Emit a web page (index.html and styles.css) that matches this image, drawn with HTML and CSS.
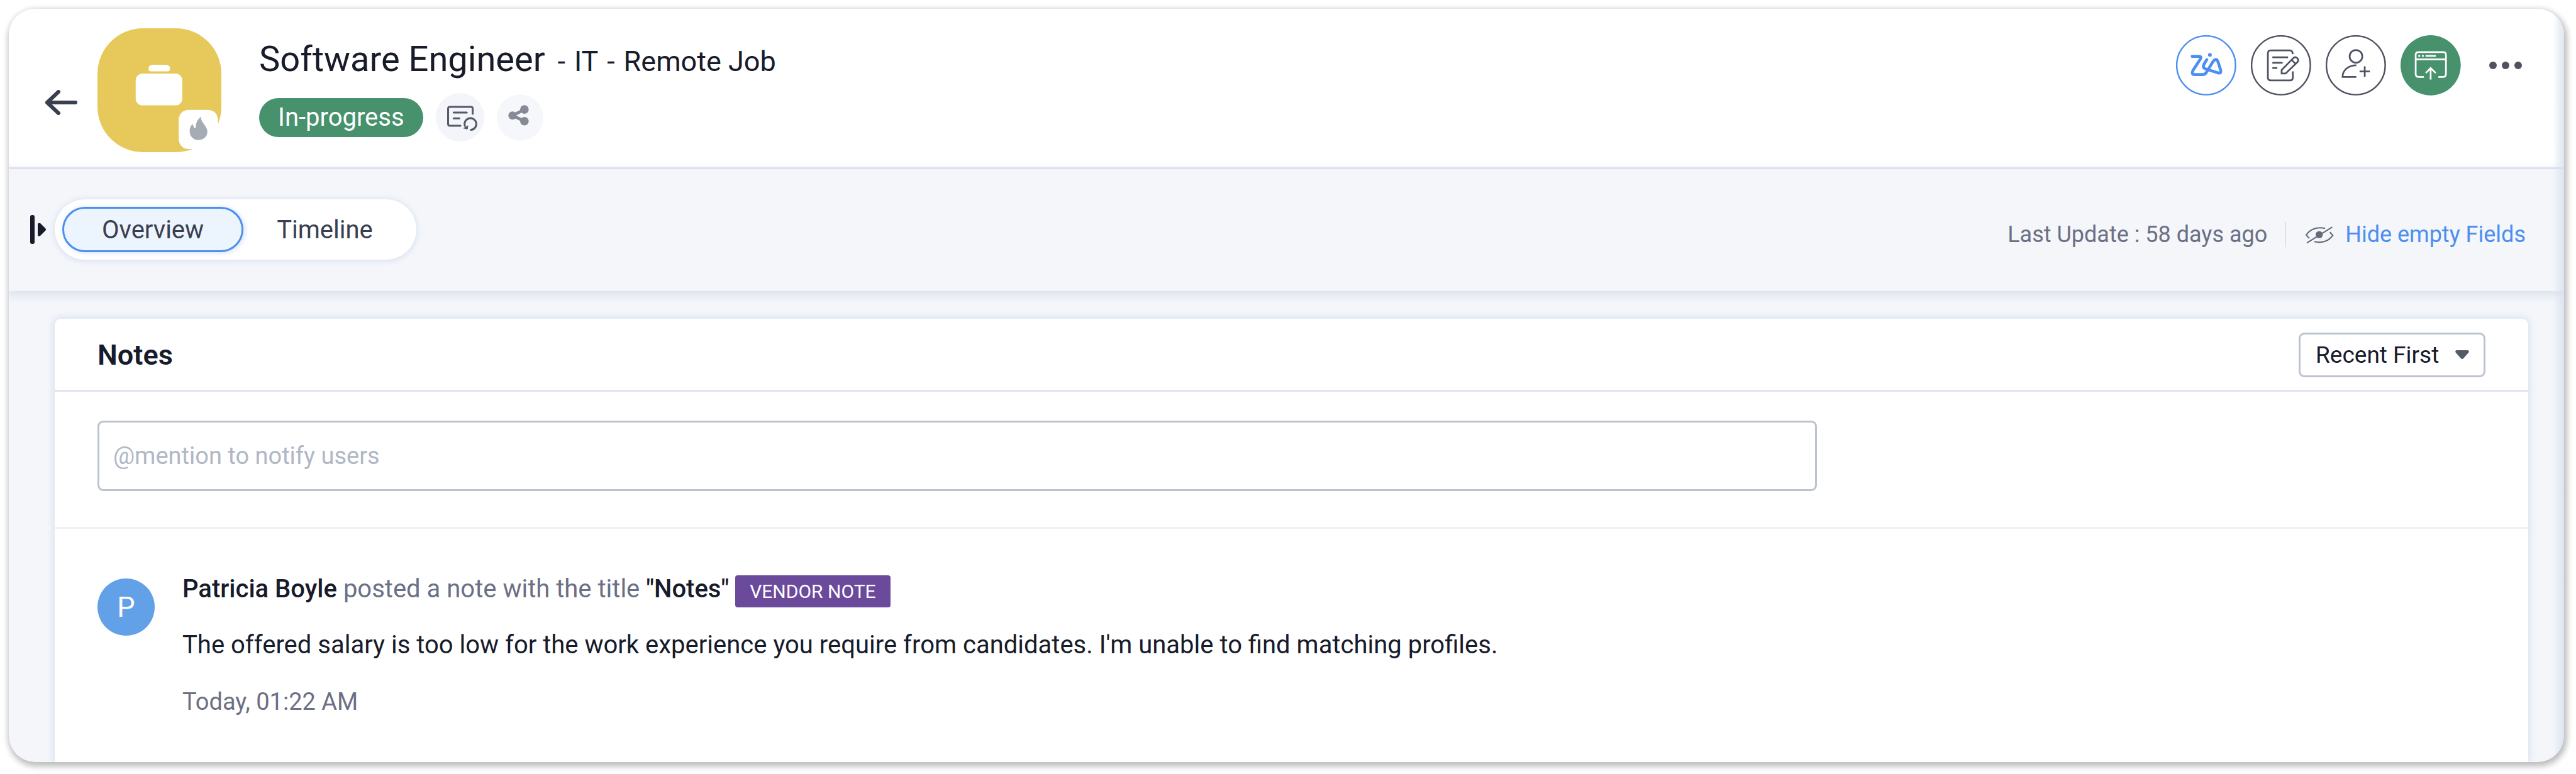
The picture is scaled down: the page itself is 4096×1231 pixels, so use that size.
FILE: index.html
```html
<!DOCTYPE html>
<html lang="en">
<head>
    <meta charset="UTF-8">
    <meta name="viewport" content="width=device-width, initial-scale=1.0">
    <title>Software Engineer - Job Opening</title>
    <link rel="stylesheet" href="styles.css">
</head>
<body>
    <main class="window">
        <header class="job-header">
            <button class="icon-btn back" aria-label="Back">
                <svg width="52" height="40" viewBox="0 0 52 40" fill="none" stroke="#3a3f4f" stroke-width="6" stroke-linecap="round" stroke-linejoin="round">
                    <path d="M49 20H4M22 3L4 20L22 37"/>
                </svg>
            </button>

            <svg class="job-logo" width="197" height="197" viewBox="0 0 723 723">
                <rect width="723" height="723" rx="265" fill="#e6c95a"/>
                <rect x="223" y="264" width="272" height="186" rx="40" fill="#fff"/>
                <path d="M298 237Q298 213 322 213H400Q423 213 423 237Q423 251 412 251H309Q298 251 298 237Z" fill="#fff"/>
                <rect x="474" y="476" width="229" height="229" rx="58" fill="#fff"/>
                <path d="M603 517C603 535 612 547 625 564C638 582 641 592 641 604C641 634 618 652 590 652C560 652 538 632 538 600C538 580 546 565 557 560C560 575 563 584 573 584C572 555 583 535 603 517Z" fill="#a5acb4"/>
            </svg>

            <div class="job-info">
                <h1>Software Engineer <small>-</small> <small>IT</small> <small>-</small> <small>Remote Job</small></h1>
                <div class="job-meta">
                    <span class="status">In-progress</span>
                    <button class="icon-btn" aria-label="Status history">
                        <svg width="77" height="77" viewBox="0 0 280 280" fill="none" stroke="#555a69" stroke-width="11" stroke-linecap="round">
                            <circle cx="140" cy="140" r="140" fill="#f4f5fa" stroke="none"/>
                            <path d="M213 120V90Q213 80 203 80H81Q71 80 71 90V179Q71 189 81 189H142M103 113H179M103 146H136"/>
                            <path d="M203 213A34 34 0 1 0 168 190"/>
                            <path d="M157 204L187 186L184 211Z" fill="#555a69" stroke="none"/>
                        </svg>
                    </button>
                    <button class="icon-btn" aria-label="Share">
                        <svg width="74" height="74" viewBox="0 0 270 270" fill="#858a96" stroke="#858a96">
                            <circle cx="135" cy="135" r="135" fill="#f6f7fb" stroke="none"/>
                            <path d="M160 88L91 123L160 156" fill="none" stroke-width="18"/>
                            <circle cx="91" cy="123" r="24" stroke="none"/>
                            <circle cx="160" cy="88" r="25" stroke="none"/>
                            <circle cx="160" cy="156" r="25" stroke="none"/>
                        </svg>
                    </button>
                </div>
            </div>

            <div class="actions">
                <button class="icon-btn" aria-label="Zia">
                    <svg width="96" height="96" viewBox="0 0 351 351" fill="none" stroke="#4c8ff0" stroke-width="17" stroke-linecap="round" stroke-linejoin="round">
                        <circle cx="175" cy="175" r="171" stroke-width="9"/>
                        <path d="M94 123H134Q150 123 142 138L99 204Q88 229 108 229H155Q168 229 176 217L216 152Q233 130 243 152L260 204Q263 224 246 219L172 196Q152 190 163 168L179 142"/>
                        <circle cx="197" cy="114" r="11" fill="#4c8ff0" stroke="none"/>
                    </svg>
                </button>
                <button class="icon-btn" aria-label="Edit">
                    <svg width="96" height="96" viewBox="0 0 351 351" fill="none" stroke="#4f5361" stroke-width="10">
                        <circle cx="175" cy="175" r="171" stroke-width="9"/>
                        <path d="M244 110Q242 88 226 88H116Q99 88 99 105V246Q99 263 116 263H228Q244 263 244 246V210"/>
                        <path d="M125 128H216M125 160H185M125 191H154"/>
                        <path d="M179 223V202L246 134Q258 122 270 134Q281 146 270 157L202 223ZM238 144L259 166"/>
                    </svg>
                </button>
                <button class="icon-btn" aria-label="Add candidate">
                    <svg width="96" height="96" viewBox="0 0 351 351" fill="none" stroke="#4f5361" stroke-width="10">
                        <circle cx="175" cy="175" r="171" stroke-width="9"/>
                        <circle cx="176" cy="123" r="37"/>
                        <path d="M178 175C130 175 98 205 98 243H178M197 211H257M227 181V241"/>
                    </svg>
                </button>
                <button class="icon-btn" aria-label="Publish">
                    <svg width="96" height="96" viewBox="0 0 351 351" fill="none" stroke="#fff" stroke-width="10">
                        <circle cx="175" cy="175" r="175" fill="#47916d" stroke="none"/>
                        <path d="M136 243H106Q88 243 88 225V114Q88 98 104 98H248Q264 98 264 114V225Q264 243 246 243H220M88 140H264"/>
                        <path d="M103 120H114M124 120H135M145 120H206M175 258V191M147 220L175 191L205 220"/>
                    </svg>
                </button>
                <button class="icon-btn more" aria-label="More">
                    <svg width="52" height="12" viewBox="0 0 52 12" fill="#4f5361">
                        <circle cx="6" cy="6" r="6"/>
                        <circle cx="26" cy="6" r="6"/>
                        <circle cx="46" cy="6" r="6"/>
                    </svg>
                </button>
            </div>
        </header>

        <div class="toolbar">
            <button class="icon-btn" aria-label="Expand sidebar">
                <svg width="26" height="46" viewBox="0 0 26 46" fill="#171b2a">
                    <rect width="7" height="46" rx="3"/>
                    <path d="M12 15Q12 12 16 13L24 21Q26 23 24 25L16 33Q12 35 12 31Z"/>
                </svg>
            </button>
            <nav class="tabs">
                <button class="tab active">Overview</button>
                <button class="tab">Timeline</button>
            </nav>
            <div class="toolbar-right">
                <span class="updated">Last Update : 58 days ago</span>
                <a class="hide-fields" href="#">
                    <svg width="46" height="29" viewBox="0 0 168 108" fill="none" stroke="#666b7b" stroke-width="8">
                        <path d="M24 75L6 55C28 22 68 4 118 16M146 38L163 57C140 90 100 106 54 94M10 102L160 8"/>
                        <circle cx="83" cy="53" r="21" fill="#666b7b" stroke="none"/>
                    </svg>
                    Hide empty Fields
                </a>
            </div>
        </div>

        <section class="card">
            <div class="card-header">
                <h2>Notes</h2>
                <div class="sort">
                    <select aria-label="Sort notes">
                        <option>Recent First</option>
                    </select>
                    <svg width="22" height="15" viewBox="0 0 22 15" fill="#555a69">
                        <path d="M2 0H20Q23 1 21 4L13 13Q11 15 9 13L1 4Q-1 1 2 0Z"/>
                    </svg>
                </div>
            </div>

            <div class="compose">
                <input type="text" aria-label="Add a note" placeholder="@mention to notify users">
            </div>

            <article class="note">
                <div class="avatar">P</div>
                <div class="note-content">
                    <div class="note-title">
                        <span><strong>Patricia Boyle</strong> posted a note with the title <strong>"Notes"</strong></span>
                        <span class="badge">VENDOR NOTE</span>
                    </div>
                    <p>The offered salary is too low for the work experience you require from candidates. I'm unable to find matching profiles.</p>
                    <time>Today, 01:22 AM</time>
                </div>
            </article>
        </section>
    </main>
</body>
</html>
```
FILE: styles.css
```css
* {
    box-sizing: border-box;
}
body {
    margin: 0;
    padding: 14px 19px 19px 14px;
    min-height: 100vh;
    display: flex;
    background: #fff;
    color: #171b2a;
    font-family: Roboto, "Liberation Sans", sans-serif;
    font-size: 40px;
}
h1, h2, p {
    margin: 0;
}
button, input, select {
    font: inherit;
    color: inherit;
}
svg {
    display: block;
    flex: none;
}
.window {
    position: relative;
    flex: 1;
    display: flex;
    flex-direction: column;
    overflow: hidden;
    border-radius: 42px;
    background: #f4f6fa;
    box-shadow: 2px 4px 10px 3px rgba(0, 0, 0, 0.26);
}
/* soft edge along the right side */
.window::after {
    content: "";
    position: absolute;
    inset: 0 0 0 auto;
    width: 18px;
    background: linear-gradient(to right, rgba(214, 224, 236, 0), rgba(214, 224, 236, 0.8));
    pointer-events: none;
}
.icon-btn {
    padding: 0;
    border: 0;
    background: none;
}

/* header */
.job-header {
    display: flex;
    align-items: flex-start;
    padding: 31px 67px 24px 57px;
    background: #fff;
    border-bottom: 3px solid #dde3ec;
}
.back {
    align-self: center;
    padding-top: 38px;
    margin-right: 32px;
}
.job-info {
    padding-top: 16px;
    margin-left: 60px;
}
h1 {
    font-size: 56px;
    font-weight: 400;
    line-height: 66px;
}
h1 small {
    font-size: 45px;
    line-height: 1;
}
h1 small:first-child {
    margin-left: 6px;
}
.job-meta {
    display: flex;
    align-items: center;
    gap: 20px;
    margin-top: 21px;
}
.status {
    padding: 0 30px;
    border-radius: 31px;
    background: #47916d;
    color: #fff;
    line-height: 62px;
}
.actions {
    display: flex;
    align-items: center;
    gap: 23px;
    margin-left: auto;
    padding-top: 11px;
}
.more {
    margin-left: 22px;
}

/* tabs bar */
.toolbar {
    display: flex;
    align-items: center;
    padding: 48px 61px 50px 34px;
    box-shadow: 0 4px 14px 2px #d9e0ec;
}
.tabs {
    display: flex;
    margin-left: 13px;
    padding: 12px 16px 12px 12px;
    border-radius: 48px;
    background: #fff;
    box-shadow: 0 1px 8px 2px #dbe3f0;
}
.tab {
    height: 72px;
    padding: 0 50px;
    border: 3px solid transparent;
    border-radius: 36px;
    background: none;
    color: #3a3f4f;
}
.tab.active {
    padding: 0 60px;
    border-color: #4c8ff0;
    background: #ecf4fe;
    box-shadow: 2px 1px 8px #d3dff0;
}
.toolbar-right {
    display: flex;
    align-items: center;
    margin-left: auto;
    padding-top: 16px;
    font-size: 36px;
    line-height: 40px;
}
.updated {
    padding-right: 28px;
    border-right: 2px solid #dce2ea;
    color: #6b7085;
}
.hide-fields {
    display: flex;
    align-items: center;
    gap: 18px;
    margin-left: 30px;
    color: #4c8ff0;
    text-decoration: none;
}

/* notes */
.card {
    flex: 1;
    margin: 44px 57px 0 73px;
    border-radius: 10px 10px 0 0;
    background: #fff;
    box-shadow: 0 0 12px 2px #d8e1ee;
}
.card-header {
    display: flex;
    align-items: center;
    justify-content: space-between;
    padding: 22px 68px 20px;
    border-bottom: 3px solid #dfe5ee;
}
h2 {
    font-size: 45px;
    font-weight: 600;
}
.sort {
    display: grid;
    align-items: center;
}
.sort select,
.sort svg {
    grid-area: 1 / 1;
}
.sort svg {
    justify-self: end;
    margin-right: 26px;
    pointer-events: none;
}
.sort select {
    appearance: none;
    height: 71px;
    padding: 0 70px 0 24px;
    border: 3px solid #bcc3cf;
    border-radius: 9px;
    background: #fff;
    font-size: 37px;
}
.compose {
    padding: 46px 68px 57px;
    border-bottom: 3px solid #eef1f5;
}
.compose input {
    display: block;
    width: 72%;
    height: 112px;
    padding: 0 22px;
    border: 3px solid #bcc3cf;
    border-radius: 9px;
    font-size: 38px;
}
.compose input::placeholder {
    color: #b0b8c6;
    opacity: 1;
}
.note {
    display: flex;
    gap: 44px;
    padding: 74px 68px 40px;
}
.avatar {
    flex: none;
    width: 91px;
    height: 91px;
    margin-top: 5px;
    border-radius: 50%;
    background: #62a0e8;
    color: #fff;
    font-size: 45px;
    line-height: 91px;
    text-align: center;
}
.note-content {
    display: flex;
    flex-direction: column;
    gap: 30px;
    line-height: 60px;
}
.note-title {
    display: flex;
    gap: 10px;
    color: #6b7085;
    line-height: 44px;
}
.note-title strong {
    color: #171b2a;
    font-weight: 500;
}
.badge {
    padding: 0 23px;
    border-radius: 4px;
    background: #6b4a9c;
    color: #fff;
    font-size: 30px;
    line-height: 51px;
}
.note-content time {
    color: #6b7085;
    font-size: 38px;
}
```
